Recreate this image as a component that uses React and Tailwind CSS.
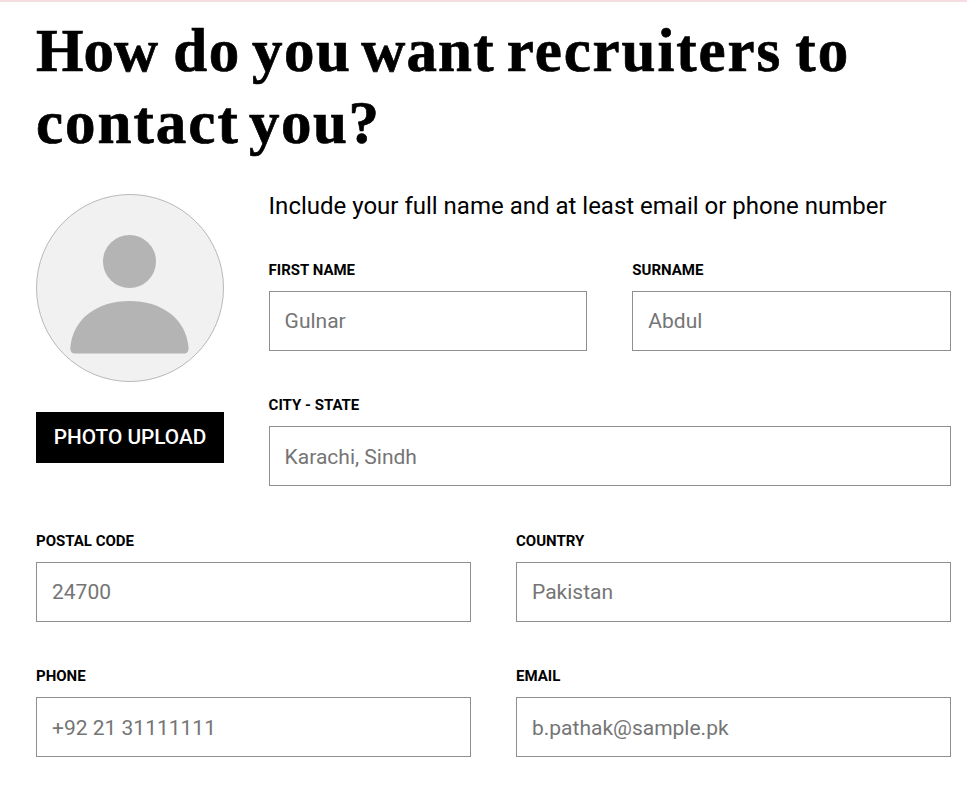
function Field({ label, placeholder, low }) {
  return (
    <label className="block min-w-0">
      <span className="block h-[22px] text-[15px] leading-[16px] font-bold whitespace-nowrap text-black uppercase">{label}</span>
      <input
        className={`mt-[7px] block h-[60px] w-full border border-[#8f8f8f] bg-white px-[15px] text-[21px] text-black placeholder:text-[#757575] ${low ? "pt-[2px]" : ""}`}
        placeholder={placeholder}
      />
    </label>
  );
}

export default function App() {
  return (
    <main className="h-[811px] overflow-hidden border-t-2 border-[#f5dce0] bg-white pr-4 pl-9 font-['Roboto',sans-serif] text-black">
      <h1 className="mt-[13px] h-[146px] font-['Liberation_Serif',serif] text-[61px] leading-[72px] font-bold [-webkit-text-stroke:0.7px_black]">
        <span className="block whitespace-nowrap">
          <span>How</span>{" "}
          <span className="mr-[-4px] tracking-[1.5px]">do</span>{" "}
          <span className="mr-[-5.5px] tracking-[1.5px]">you</span>{" "}
          <span className="mr-[-3.2px] tracking-[1.2px]">want</span>{" "}
          <span className="mr-[-2px] tracking-[1.9px]">recruiters</span>{" "}
          <span className="tracking-[2px]">to</span>
        </span>
        <span className="block whitespace-nowrap">
          <span className="mr-[-6px] tracking-[2px]">contact</span>{" "}
          <span className="tracking-[1.5px]">you?</span>
        </span>
      </h1>
      <div className="mt-[33px] flex gap-[44.6px]">
        <div className="w-[188px] shrink-0">
          <svg viewBox="0 0 188 188" className="block size-[188px]">
            <circle cx="94" cy="94" r="93.5" fill="#f1f1f1" stroke="#b8b8b8" />
            <circle cx="93.5" cy="67.5" r="26.5" fill="#b4b4b4" />
            <path d="M39 159.500Q34 159.500 34.300 153.500C37 124 62 107 93.500 107S150 124 152.500 153.500Q153 159.500 148 159.500Z" fill="#b4b4b4" />
          </svg>
          <button className="mt-[30px] block h-[51px] w-full bg-black text-[20.8px] font-medium whitespace-nowrap text-white">PHOTO UPLOAD</button>
        </div>
        <div className="min-w-0 flex-1">
          <p className="h-[67.8px] text-[24px] leading-[24px] whitespace-nowrap">Include your full name and at least email or phone number</p>
          <div className="grid grid-cols-2 gap-x-[45px] gap-y-[46.5px]">
            <Field label="First name" placeholder="Gulnar" />
            <Field label="Surname" placeholder="Abdul" />
            <div className="col-span-2"><Field low label="City - State" placeholder="Karachi, Sindh" /></div>
          </div>
        </div>
      </div>
      <div className="mt-[46.5px] grid grid-cols-2 gap-x-[45px] gap-y-[46.5px]">
        <Field label="Postal code" placeholder="24700" />
        <Field label="Country" placeholder="Pakistan" />
        <Field low label="Phone" placeholder="+92 21 31111111" />
        <Field low label="Email" placeholder="b.pathak@sample.pk" />
      </div>
    </main>
  );
}
